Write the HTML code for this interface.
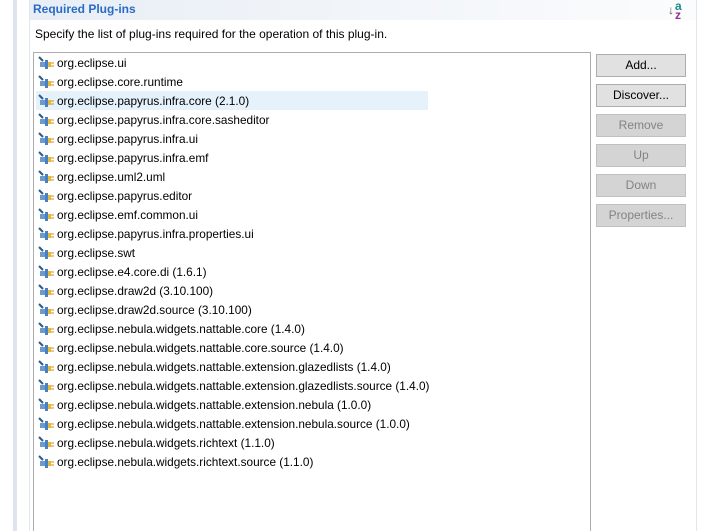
<!DOCTYPE html>
<html style="overflow:hidden"><head><style>
html,body{margin:0;width:710px;height:531px;overflow:hidden}
body{background:#fff;position:relative;font-family:"Segoe UI","Liberation Sans",sans-serif;font-size:12px;color:#000}
.strip{position:absolute;left:13px;top:0;width:4px;height:531px;background:#dfe3f0}
.sec{position:absolute;left:29px;top:0;width:666px;height:531px;border-left:1px solid #e3e6ea;border-right:1px solid #e3e6ea}
.hdr{position:absolute;left:0;top:0;right:0;height:20px;background:linear-gradient(to right,#e8eef6,#fbfcfd)}
.hdr span{position:absolute;left:3px;top:2px;color:#2a6bc4;font-weight:bold;font-size:12px}
.desc{position:absolute;left:35px;top:27px;font-size:12px}
.list{position:absolute;left:33px;top:52px;width:556px;height:490px;border:1px solid #adadad;background:#fff}
.row{position:absolute;left:2px;height:19px;line-height:19px;white-space:nowrap;font-size:11.8px}
.row svg{position:absolute;left:2px;top:2px}
.row span{position:absolute;left:21px;top:0}
.sel{position:absolute;left:2px;top:38px;width:392px;height:19px;background:#e5f1fb}
.btn{position:absolute;left:596px;width:88px;height:21px;border:1px solid #adadad;background:#e1e1e1;text-align:center;line-height:21px;font-size:12px}
.dis{background:#d4d4d4;border-color:#c0c0c0;color:#838383}
.sort{position:absolute;left:668px;top:2px;width:16px;height:18px;font-size:12px;font-weight:bold}
</style></head><body>
<div class="strip"></div>
<div class="sec"><div class="hdr"><span>Required Plug-ins</span></div></div>
<div class="sort"><span style="color:#555;position:absolute;left:0;top:1px;font-weight:normal;font-size:12px">↓</span><span style="color:#1a8a8a;position:absolute;left:7px;top:-3px">a</span><span style="color:#9a2a9a;position:absolute;left:7px;top:6px">z</span></div>
<div class="desc">Specify the list of plug-ins required for the operation of this plug-in.</div>
<div class="list">
<div class="sel"></div>
<div id="rows"></div>
</div>
<div class="btn" style="top:54px">Add...</div>
<div class="btn" style="top:84px;border-color:#adadad">Discover...</div>
<div class="btn dis" style="top:114px">Remove</div>
<div class="btn dis" style="top:144px">Up</div>
<div class="btn dis" style="top:174px">Down</div>
<div class="btn dis" style="top:204px">Properties...</div>
<script>
var n=["org.eclipse.ui","org.eclipse.core.runtime","org.eclipse.papyrus.infra.core (2.1.0)","org.eclipse.papyrus.infra.core.sasheditor","org.eclipse.papyrus.infra.ui","org.eclipse.papyrus.infra.emf","org.eclipse.uml2.uml","org.eclipse.papyrus.editor","org.eclipse.emf.common.ui","org.eclipse.papyrus.infra.properties.ui","org.eclipse.swt","org.eclipse.e4.core.di (1.6.1)","org.eclipse.draw2d (3.10.100)","org.eclipse.draw2d.source (3.10.100)","org.eclipse.nebula.widgets.nattable.core (1.4.0)","org.eclipse.nebula.widgets.nattable.core.source (1.4.0)","org.eclipse.nebula.widgets.nattable.extension.glazedlists (1.4.0)","org.eclipse.nebula.widgets.nattable.extension.glazedlists.source (1.4.0)","org.eclipse.nebula.widgets.nattable.extension.nebula (1.0.0)","org.eclipse.nebula.widgets.nattable.extension.nebula.source (1.0.0)","org.eclipse.nebula.widgets.richtext (1.1.0)","org.eclipse.nebula.widgets.richtext.source (1.1.0)"];
var ic='<svg width="17" height="15" viewBox="0 0 17 15"><path d="M1 1l4 4" stroke="#2a5a8a" stroke-width="2"/><rect x="2" y="6" width="5" height="5" fill="#6a9ad0"/><rect x="7" y="4" width="3" height="9" fill="#4a80c0"/><path d="M10 6h3v5h-3z" fill="#e8b830"/><path d="M13 7h3M13 10h3" stroke="#c89020" stroke-width="1"/></svg>';
var h='';n.forEach(function(t,i){h+='<div class="row" style="top:'+(1+i*19)+'px">'+ic+'<span>'+t+'</span></div>'});
document.getElementById('rows').innerHTML=h;
</script>
</body></html>
